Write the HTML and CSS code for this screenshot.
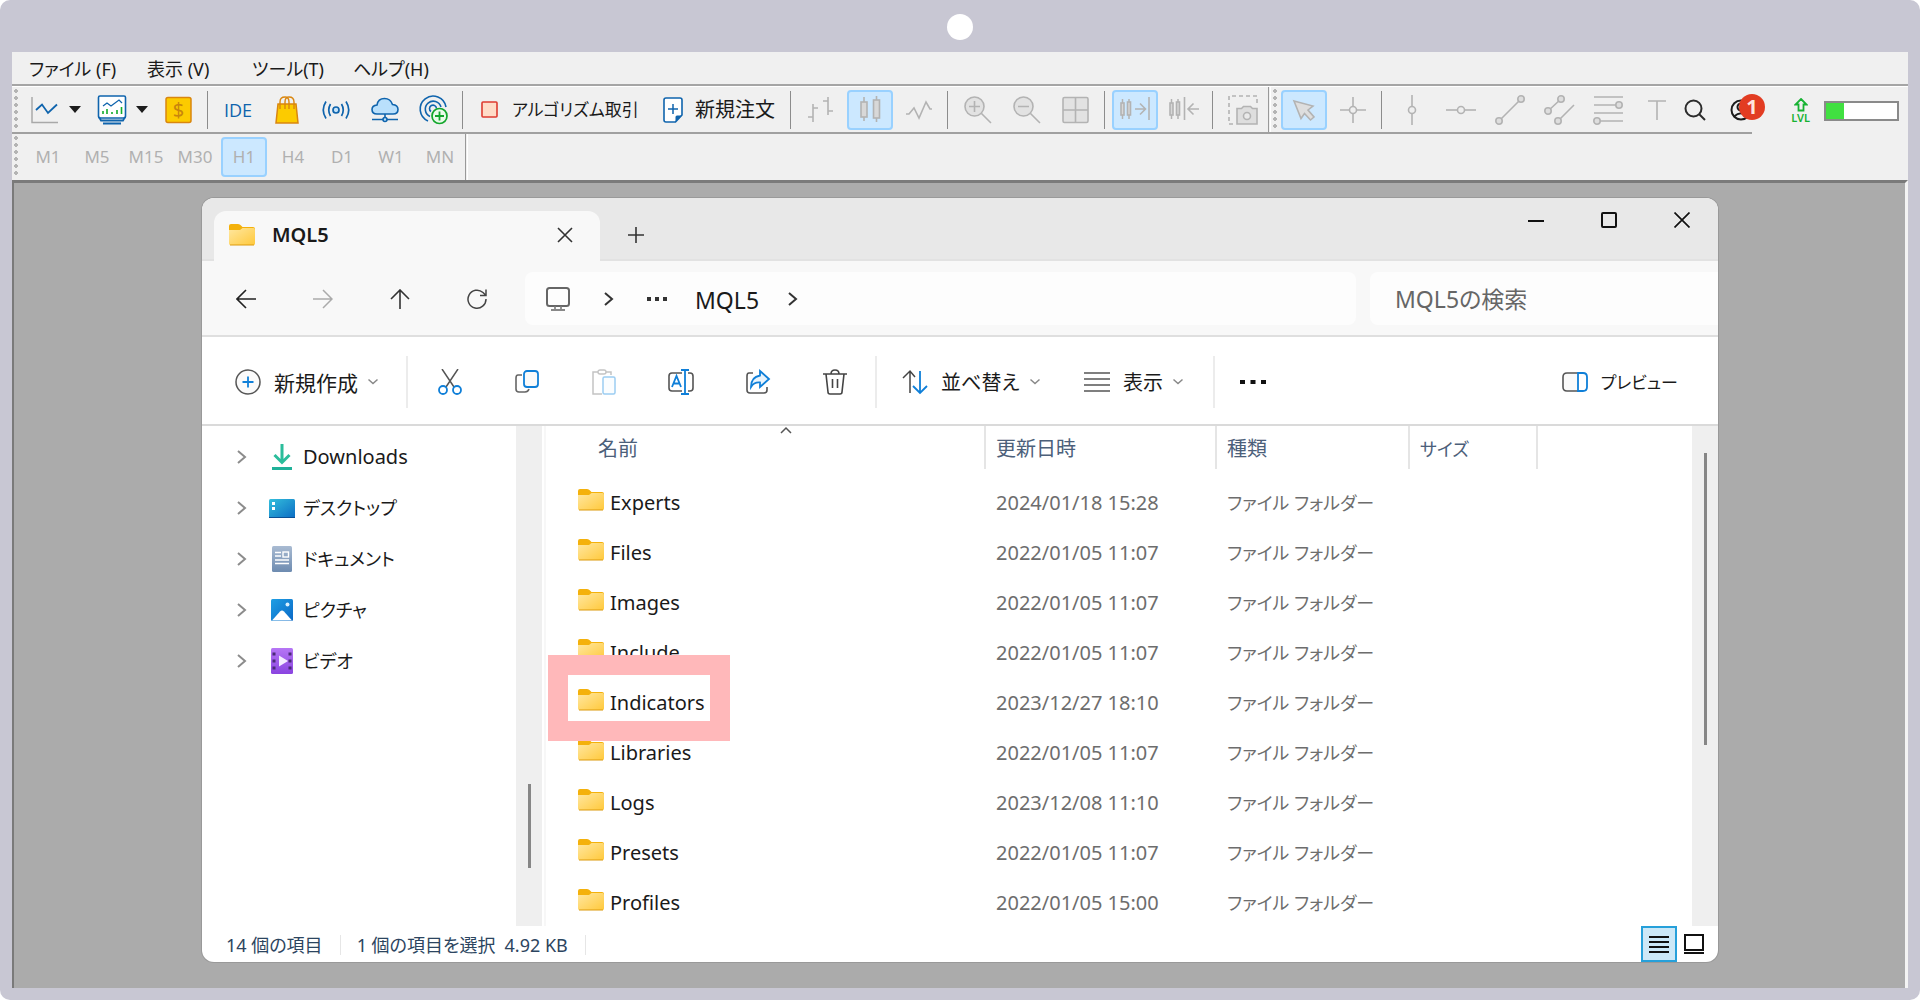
FILE: index.html
```html
<!DOCTYPE html>
<html lang="ja">
<head>
<meta charset="utf-8">
<title>MQL5</title>
<link rel="stylesheet" href="styles.css">
</head>
<body>
<svg class="defs" aria-hidden="true">
  <defs>
    <linearGradient id="gFolder" x1="0" y1="0" x2="1" y2="1"><stop offset="0" stop-color="#ffe7a0"/><stop offset="1" stop-color="#ffc93c"/></linearGradient>
    <linearGradient id="gDesk" x1="0" y1="0" x2="1" y2="1"><stop offset="0" stop-color="#34bfdc"/><stop offset="1" stop-color="#0b6cc4"/></linearGradient>
    <linearGradient id="gDoc" x1="0" y1="0" x2="0" y2="1"><stop offset="0" stop-color="#a9bbd2"/><stop offset="1" stop-color="#6d8bb0"/></linearGradient>
    <linearGradient id="gPic" x1="0" y1="0" x2="1" y2="1"><stop offset="0" stop-color="#1f9fe4"/><stop offset="1" stop-color="#0a68c6"/></linearGradient>
    <linearGradient id="gVid" x1="0" y1="0" x2="0" y2="1"><stop offset="0" stop-color="#b676f5"/><stop offset="1" stop-color="#8a44e0"/></linearGradient>
    <symbol id="folder" viewBox="0 0 26 22"><path d="M0 8V2Q0 0 2 0H9Q11 0 12 1.5L13.5 3H24Q26 3 26 5V8Z" fill="#f4b10b"/><path d="M0 6H11L13.5 4H24.500Q26 4 26 6V19.500Q26 21 24.500 21H1.500Q0 21 0 19.500Z" fill="url(#gFolder)"/><path d="M1 21H25" stroke="#dc9a0c" stroke-width="1"/></symbol>
    <symbol id="right" viewBox="0 0 12 16"><path d="M2 2L9 8L2 14" fill="none" stroke="currentColor" stroke-width="2"/></symbol>
    <symbol id="down" viewBox="0 0 12 8"><path d="M1.500 1.500L6 5.500L10.500 1.500" fill="none" stroke="currentColor" stroke-width="1.500"/></symbol>
    <symbol id="tri" viewBox="0 0 12 7"><path d="M0 0H12L6 7Z" fill="#1c1c1c"/></symbol>
    <symbol id="candles" viewBox="0 0 12 20"><path d="M2.500 0V20M9 0V20" stroke="#b3b3b3" stroke-width="1.500"/><rect x="1" y="4" width="3" height="12" fill="#d8d8d8" stroke="#b3b3b3"/><rect x="7.500" y="3" width="3" height="13" fill="#d8d8d8" stroke="#b3b3b3"/></symbol>
  </defs>
</svg>

<div class="device">
  <div class="bezel"><span class="camera"></span></div>
  <main class="app">
    <nav class="menubar" aria-label="メニュー">
      <button>ファイル (F)</button><button>表示 (V)</button><button>ツール(T)</button><button>ヘルプ(H)</button>
    </nav>

    <div class="bar-row">
      <div class="toolbar main-bar">
        <span class="grip"></span>
        <button class="tool split" aria-label="チャート"><svg class="i30" viewBox="0 0 30 30"><path d="M2 2V27.500H28" stroke="#a9a9a9" stroke-width="1.500"/><path d="M6 15L12 9.500L18 18L27 9.500" stroke="#0f64ad" stroke-width="1.800"/></svg><svg class="tri"><use href="#tri"/></svg></button>
        <button class="tool split" aria-label="表示"><svg class="i30" viewBox="0 0 30 30"><rect x="1.500" y="1" width="27" height="22" rx="1.500" fill="#fff" stroke="#0f64ad" stroke-width="1.600"/><path d="M6 11L10 8L14 11L22 5L25 8" stroke="#0f64ad" stroke-width="1.300"/><path d="M6 16V19M10 14V19M15 17V19M20 15V19M24.500 12V19" stroke="#12ad2b" stroke-width="1.600"/><path d="M2 22L4 25.500H26L28 22M6 28.500H24" stroke="#0f64ad" stroke-width="1.800"/></svg><svg class="tri"><use href="#tri"/></svg></button>
        <button class="tool" aria-label="口座"><svg class="i30" viewBox="0 0 30 30"><rect x="2" y="2.500" width="25" height="25" rx="2" fill="#fccb00" stroke="#d9860f" stroke-width="1.500"/><text class="dollar" x="14.500" y="22" text-anchor="middle">$</text></svg></button>
        <span class="sep"></span>
        <button class="tool ide">IDE</button>
        <button class="tool" aria-label="マーケット"><svg class="i30" viewBox="0 0 30 30"><path d="M6 9H24L26 28H4Z" fill="#fccb00" stroke="#d9860f" stroke-width="1.500"/><path d="M8 14V7Q8 2 13 2Q17 2 17 7V14M13 14V7Q13 2 17 2Q22 2 22 7V14" stroke="#d9860f" stroke-width="1.400"/></svg></button>
        <button class="tool" aria-label="シグナル"><svg class="i30" viewBox="0 0 30 30"><g stroke="#0f64ad" stroke-width="1.700"><circle cx="15" cy="15" r="3" fill="#c5e4fb"/><path d="M9.500 9Q6 15 9.500 21M20.500 9Q24 15 20.500 21M5 6.500Q-.5 15 5 23.500M25 6.500Q30.500 15 25 23.500"/></g></svg></button>
        <button class="tool" aria-label="VPS"><svg class="i30" viewBox="0 0 30 30"><g stroke="#0f64ad" stroke-width="1.600"><path d="M7 19Q2 19 2 14.500Q2 10.500 7 10Q8 3.500 14.500 3.500Q20.500 3.500 22.500 9.500Q28 10 28 14.500Q28 19 23 19Z" fill="#b9e0fc"/><path d="M15 19V23M2 24.500H28"/><circle cx="15" cy="24.500" r="2" fill="#b9e0fc"/></g></svg></button>
        <button class="tool" aria-label="追加"><svg class="i30" viewBox="0 0 30 30"><g stroke="#0f64ad" stroke-width="1.600"><path d="M9 26A13 13 0 1 1 27 12M11 21.500A8 8 0 1 1 22 12M12 16.500A3.500 3.500 0 1 1 17.500 13.500"/></g><circle cx="20.500" cy="21" r="7.500" fill="#e9fbe9" stroke="#12a62b" stroke-width="1.700"/><path d="M20.500 16.500V25.500M16 21H25" stroke="#12a62b" stroke-width="1.800"/></svg></button>
        <span class="sep"></span>
        <button class="tool labelled algo"><svg class="i20" viewBox="0 0 20 20"><rect x="2" y="2" width="15" height="15" rx="1" fill="#ffdcc8" stroke="#de3b30" stroke-width="1.600"/></svg>アルゴリズム取引</button>
        <button class="tool labelled order"><svg class="i2026" viewBox="0 0 20 26"><path d="M3 1H17Q19 1 19 3V18L12.500 25H3Q1 25 1 23V3Q1 1 3 1Z" fill="#fff" stroke="#0f64ad" stroke-width="1.600"/><path d="M12.500 25V20Q12.500 18.500 14 18.500H19Z" fill="#0f64ad"/><path d="M10 7V17M5 12H15" stroke="#0f64ad" stroke-width="1.500"/></svg>新規注文</button>
        <span class="sep"></span>
        <button class="tool gray" aria-label="バー"><svg class="i30" viewBox="0 0 30 30"><path d="M7 9V27M2 22H7M7 13H12M22 2V20M17 6H22M22 16H27"/></svg></button>
        <button class="tool gray on" aria-label="ローソク足"><svg class="i30" viewBox="0 0 30 30"><path d="M9 2V26M21.500 1V27"/><rect x="6" y="7" width="6" height="15" fill="#d8d8d8"/><rect x="18.500" y="5" width="6" height="18" fill="#d8d8d8"/></svg></button>
        <button class="tool gray" aria-label="ライン"><svg class="i30" viewBox="0 0 30 30"><path d="M2 19H5L10 13L15 23L22 7L26 14H28"/></svg></button>
        <span class="sep"></span>
        <button class="tool gray" aria-label="拡大"><svg class="i30" viewBox="0 0 30 30"><circle cx="11.500" cy="11.500" r="9.500" fill="#e2e2e2"/><path d="M18.500 18.500L28 28M6 11.500H17M11.500 6V17"/></svg></button>
        <button class="tool gray" aria-label="縮小"><svg class="i30" viewBox="0 0 30 30"><circle cx="11.500" cy="11.500" r="9.500" fill="#e2e2e2"/><path d="M18.500 18.500L28 28M6 11.500H17"/></svg></button>
        <button class="tool gray" aria-label="整列"><svg class="i30" viewBox="0 0 30 30"><rect x="2" y="2.500" width="25" height="25" rx="1.500" fill="#e2e2e2"/><path d="M14.500 2.500V27.500M2 15H27"/></svg></button>
        <span class="sep"></span>
        <button class="tool gray on" aria-label="自動スクロール"><svg class="i30" viewBox="0 0 30 30"><use href="#candles" x="0" y="4" width="12" height="20"/><path d="M15 14H25M20 8.500L25.500 14L20 19.500M29 2V25"/></svg></button>
        <button class="tool gray" aria-label="チャートシフト"><svg class="i30" viewBox="0 0 30 30"><use href="#candles" x="0" y="4" width="12" height="20"/><path d="M15.500 2V25M19.500 14H30M24.500 8.500L19 14L24.500 19.500"/></svg></button>
        <span class="sep"></span>
        <button class="tool gray" aria-label="スクリーンショット"><svg class="i30" viewBox="0 0 30 30"><path d="M5 29H1V1H29V11" stroke-dasharray="4 3"/><path d="M9 13.500H13.500L15.500 11.500H22.500L24.500 13.500H29V29H9Z" fill="#dedede"/><circle cx="19" cy="21" r="3.500" fill="#e9e9e9"/></svg></button>
        <span class="endline"></span>
        <span class="grip"></span>
        <button class="tool gray on" aria-label="カーソル"><svg class="i30" viewBox="0 0 30 30"><path d="M5 6L24 11L19 15L25 22L21.500 25L15.500 18.500L12 23.500Z" fill="#dedede"/></svg></button>
        <button class="tool gray" aria-label="十字"><svg class="i30" viewBox="0 0 30 30"><path d="M15 2V28M2 15H28"/><circle cx="15" cy="15" r="3.500" fill="#efefef"/></svg></button>
        <span class="sep"></span>
        <button class="tool gray" aria-label="垂直線"><svg class="i30" viewBox="0 0 30 30"><path d="M15 0V30"/><circle cx="15" cy="15" r="3.500" fill="#efefef"/></svg></button>
        <button class="tool gray" aria-label="水平線"><svg class="i30" viewBox="0 0 30 30"><path d="M0 15H30"/><circle cx="15" cy="15" r="3.500" fill="#efefef"/></svg></button>
        <button class="tool gray" aria-label="トレンドライン"><svg class="i30" viewBox="0 0 30 30"><path d="M4 26L26 4"/><circle cx="4" cy="26" r="3.200" fill="#dedede"/><circle cx="26" cy="4" r="3.200" fill="#dedede"/></svg></button>
        <button class="tool gray" aria-label="チャンネル"><svg class="i30" viewBox="0 0 30 30"><path d="M4 16L17 4M14 26L30 10"/><circle cx="4" cy="16" r="3.200" fill="#dedede"/><circle cx="17" cy="4" r="3.200" fill="#dedede"/><circle cx="14" cy="26" r="3.200" fill="#dedede"/></svg></button>
        <button class="tool gray" aria-label="フィボナッチ"><svg class="i30" viewBox="0 0 30 30"><path d="M1 2H30M1 10H26M1 18H30M4 26H30"/><circle cx="26" cy="10" r="3.200" fill="#dedede"/><circle cx="4" cy="26" r="3.200" fill="#dedede"/></svg></button>
        <button class="tool gray" aria-label="テキスト"><svg class="i30" viewBox="0 0 30 30"><path d="M6 6H24M15 6V25"/></svg></button>
        <span class="account">
          <button class="plain" aria-label="検索"><svg class="i22" viewBox="0 0 22 22"><circle cx="9.500" cy="9.500" r="8" stroke="#2b2b2b" stroke-width="2"/><path d="M15 15L21 21" stroke="#2b2b2b" stroke-width="2"/></svg></button>
          <button class="plain user" aria-label="通知"><svg class="i22" viewBox="0 0 22 22"><circle cx="11" cy="11" r="9.500" stroke="#1c1c1c" stroke-width="2"/><circle cx="11" cy="8" r="3.500" stroke="#1c1c1c" stroke-width="2"/><path d="M4 17.500Q11 11 18 17.500" stroke="#1c1c1c" stroke-width="2"/></svg><span class="badge">1</span></button>
        </span>
      </div>
      <div class="status-tools">
        <span class="lvl"><svg class="lvl-arrow" viewBox="0 0 14 14"><path d="M7 1L12.500 6.500H9.500V12.500H4.500V6.500H1.500Z" stroke="#17b233" stroke-width="1.800"/></svg>LVL</span>
        <span class="meter"><span class="meter-fill"></span></span>
      </div>
    </div>

    <div class="toolbar frames">
      <span class="grip"></span>
      <button class="tool">M1</button><button class="tool">M5</button><button class="tool">M15</button><button class="tool">M30</button><button class="tool on">H1</button><button class="tool">H4</button><button class="tool">D1</button><button class="tool">W1</button><button class="tool">MN</button>
      <span class="endline"></span>
    </div>

    <div class="workspace">
      <section class="explorer">
        <header class="titlebar">
          <div class="tab"><svg class="folder"><use href="#folder"/></svg><strong>MQL5</strong><button class="plain" aria-label="タブを閉じる"><svg class="i16" viewBox="0 0 16 16"><path d="M1 1L15 15M15 1L1 15" stroke="#333" stroke-width="1.600"/></svg></button></div>
          <button class="plain newtab" aria-label="新しいタブ"><svg class="i16" viewBox="0 0 16 16"><path d="M8 0V16M0 8H16" stroke="#333" stroke-width="1.600"/></svg></button>
          <div class="controls">
            <button class="plain" aria-label="最小化"><svg class="i16" viewBox="0 0 16 16"><path d="M0 9H16" stroke="#111" stroke-width="2"/></svg></button>
            <button class="plain" aria-label="最大化"><svg class="i16" viewBox="0 0 16 16"><rect x="1" y="1" width="14" height="14" rx="1" stroke="#111" stroke-width="2"/></svg></button>
            <button class="plain" aria-label="閉じる"><svg class="i16" viewBox="0 0 16 16"><path d="M.5 .5L15.500 15.500M15.500 .5L.5 15.500" stroke="#111" stroke-width="1.700"/></svg></button>
          </div>
        </header>

        <div class="navbar">
          <button class="plain nav" aria-label="戻る"><svg class="i20" viewBox="0 0 20 20"><path d="M20 10H1M10 1L1 10L10 19" stroke="#222" stroke-width="1.600"/></svg></button>
          <button class="plain nav" aria-label="進む"><svg class="i20" viewBox="0 0 20 20"><path d="M0 10H19M10 1L19 10L10 19" stroke="#aaa" stroke-width="1.500"/></svg></button>
          <button class="plain nav" aria-label="上へ"><svg class="i20" viewBox="0 0 20 20"><path d="M10 20V1M1 10L10 1L19 10" stroke="#333" stroke-width="1.600"/></svg></button>
          <button class="plain nav" aria-label="更新"><svg class="i20" viewBox="0 0 20 20"><path d="M19 10A9 9 0 1 1 16 3.500L18.500 6M19 .5V6.500H13" stroke="#444" stroke-width="1.500"/></svg></button>
          <div class="address">
            <svg class="pc" viewBox="0 0 24 24"><rect x="1" y="1" width="22" height="18" rx="2.500" stroke="#666" stroke-width="2"/><path d="M9 19.500V22M15 19.500V22M5 23H19" stroke="#888" stroke-width="1.800"/></svg>
            <svg class="crumb"><use href="#right"/></svg>
            <svg class="dots3" viewBox="0 0 20 4"><path d="M0 0H4V4H0ZM8 0H12V4H8ZM16 0H20V4H16Z" fill="#333"/></svg>
            <a href="#" class="path">MQL5</a>
            <svg class="crumb"><use href="#right"/></svg>
          </div>
          <input class="search" type="search" placeholder="MQL5の検索" aria-label="MQL5の検索">
        </div>

        <div class="commands">
          <button class="plain cmd create"><svg class="i26" viewBox="0 0 26 26"><circle cx="13" cy="13" r="12" fill="#fafafa" stroke="#555" stroke-width="1.500"/><path d="M13 7.500V18.500M7.500 13H18.500" stroke="#0f7fd8" stroke-width="1.800"/></svg><span>新規作成</span><svg class="down"><use href="#down"/></svg></button>
          <span class="csep"></span>
          <button class="plain nav" aria-label="切り取り"><svg class="i26" viewBox="0 0 26 26"><path d="M5 0L17 18M21 0L9 18" stroke="#555" stroke-width="1.500"/><circle cx="6" cy="21" r="4" fill="#fff" stroke="#0f7fd8" stroke-width="1.800"/><circle cx="20" cy="21" r="4" fill="#fff" stroke="#0f7fd8" stroke-width="1.800"/></svg></button>
          <button class="plain nav" aria-label="コピー"><svg class="i26" viewBox="0 0 26 26"><path d="M8 6H4Q2 6 2 9V20Q2 23 5 23H11Q14 23 15 20" stroke="#666" stroke-width="1.600"/><rect x="10" y="2" width="14" height="16" rx="3" fill="#fafafa" stroke="#0f7fd8" stroke-width="1.800"/></svg></button>
          <button class="plain nav" aria-label="貼り付け"><svg class="i26" viewBox="0 0 26 26"><path d="M11 25H2V3H7M15 3H20V6" stroke="#c4c4c4" stroke-width="1.500"/><rect x="7" y="1" width="8" height="4" rx="2" stroke="#c4c4c4" stroke-width="1.400"/><rect x="12" y="8" width="12" height="17" rx="1.500" fill="#fafdff" stroke="#9ccdf2" stroke-width="1.500"/></svg></button>
          <button class="plain nav" aria-label="名前の変更"><svg class="i28" viewBox="0 0 28 26"><path d="M15 4H5Q2 4 2 7V19Q2 22 5 22H15M21 4H23Q26 4 26 7V19Q26 22 23 22H21" stroke="#555" stroke-width="1.600"/><path d="M5 18L9.500 7L14 18M6.500 14.500H12.500M14 1H22M18 1V25M14 25H22" stroke="#0f7fd8" stroke-width="1.800"/></svg></button>
          <button class="plain nav" aria-label="共有"><svg class="i26" viewBox="0 0 26 26"><path d="M8 4H4Q2 4 2 7V21Q2 24 5 24H19Q22 24 22 21V18" stroke="#555" stroke-width="1.600"/><path d="M15 2L24 10L15 18V13.500Q9 13 6 18Q6 8 15 6.500Z" fill="#e8f4fd" stroke="#0f7fd8" stroke-width="1.800"/></svg></button>
          <button class="plain nav" aria-label="削除"><svg class="i26" viewBox="0 0 26 26"><path d="M1 5H25M9 5Q9 1 13 1Q17 1 17 5M4 5L6 23Q6 25 8 25H18Q20 25 20 23L22 5M10.500 10V19M15.500 10V19" stroke="#444" stroke-width="1.600"/></svg></button>
          <span class="csep"></span>
          <button class="plain cmd sort"><svg class="i26" viewBox="0 0 26 26"><path d="M8 24V2M1 9L8 2L13 8" stroke="#444" stroke-width="1.500"/><path d="M18 2V24M11 17L18 24L25 17" stroke="#0f7fd8" stroke-width="1.800"/></svg><span>並べ替え</span><svg class="down"><use href="#down"/></svg></button>
          <button class="plain cmd view"><svg class="i26" viewBox="0 0 26 26"><path d="M0 4H26M0 10H26M0 16H26M0 22H26" stroke="#555" stroke-width="1.600"/></svg><span>表示</span><svg class="down"><use href="#down"/></svg></button>
          <span class="csep"></span>
          <button class="plain cmd more" aria-label="その他"><svg class="i26" viewBox="0 0 26 26"><path d="M0 11H5V15H0ZM10.500 11H15.500V15H10.500ZM21 11H26V15H21Z" fill="#111"/></svg></button>
          <button class="plain cmd preview"><svg class="i26" viewBox="0 0 26 26"><path d="M16 4H5Q1 4 1 8V18Q1 22 5 22H16" fill="#fafafa" stroke="#555" stroke-width="1.600"/><path d="M16 4H21Q25 4 25 8V18Q25 22 21 22H16Z" stroke="#0f7fd8" stroke-width="1.800"/></svg><span>プレビュー</span></button>
        </div>

        <div class="content">
          <nav class="tree" aria-label="フォルダー">
            <a href="#"><svg class="exp"><use href="#right"/></svg><svg class="i26" viewBox="0 0 26 26"><path d="M13 0V18M5.500 11L13 18.500L20.500 11" stroke="#2bbd9b" stroke-width="3"/><rect x="3" y="23" width="20" height="3" fill="#1fb199"/></svg>Downloads</a>
            <a href="#" class="kana"><svg class="exp"><use href="#right"/></svg><svg class="i26" viewBox="0 0 26 26"><rect y="4" width="26" height="19" rx="1.500" fill="url(#gDesk)"/><path d="M3 7H6V10H3ZM3 12H6V15H3Z" fill="#fff"/><path d="M0 22.500H26" stroke="#0a4f94"/></svg>デスクトップ</a>
            <a href="#" class="kana"><svg class="exp"><use href="#right"/></svg><svg class="i26" viewBox="0 0 26 26"><rect x="3" width="20" height="26" rx="1.500" fill="url(#gDoc)"/><path d="M6 6.500H12M6 10H12M6 14H20M6 17.500H20" stroke="#fff" stroke-width="1.500"/><rect x="14" y="6" width="5.500" height="5" stroke="#fff" stroke-width="1.400"/></svg>ドキュメント</a>
            <a href="#" class="kana"><svg class="exp"><use href="#right"/></svg><svg class="i26" viewBox="0 0 26 26"><rect x="2" y="2" width="22" height="22" rx="1.500" fill="url(#gPic)"/><path d="M3 23.500L11 14.500Q13 12.500 15 14.500L23 23.500Z" fill="#fff"/><circle cx="18.500" cy="7.500" r="2" fill="#d9f0ff"/></svg>ピクチャ</a>
            <a href="#" class="kana"><svg class="exp"><use href="#right"/></svg><svg class="i26" viewBox="0 0 26 26"><rect x="2" width="22" height="26" rx="1.500" fill="url(#gVid)"/><path d="M3.500 4.500H6.500V7.500H3.500ZM3.500 11.500H6.500V14.500H3.500ZM3.500 18.500H6.500V21.500H3.500ZM19.500 4.500H22.500V7.500H19.500ZM19.500 11.500H22.500V14.500H19.500ZM19.500 18.500H22.500V21.500H19.500Z" fill="#4b2a78"/><path d="M10 7.500L19 13L10 18.500Z" fill="#f4ecff"/></svg>ビデオ</a>
          </nav>
          <div class="scroll left"><span class="thumb"></span></div>
          <div class="listing">
            <svg class="sorted" viewBox="0 0 12 8"><path d="M1 7L6 2L11 7" fill="none" stroke="#555" stroke-width="1.500"/></svg>
            <table>
              <colgroup><col class="c-name"><col class="c-date"><col class="c-type"><col class="c-size"><col></colgroup>
              <thead><tr><th><span>名前</span></th><th><span>更新日時</span></th><th><span>種類</span></th><th><span class="kana">サイズ</span></th><th></th></tr></thead>
              <tbody>
                <tr><td><svg class="folder"><use href="#folder"/></svg>Experts</td><td>2024/01/18 15:28</td><td>ファイル フォルダー</td><td></td><td></td></tr>
                <tr><td><svg class="folder"><use href="#folder"/></svg>Files</td><td>2022/01/05 11:07</td><td>ファイル フォルダー</td><td></td><td></td></tr>
                <tr><td><svg class="folder"><use href="#folder"/></svg>Images</td><td>2022/01/05 11:07</td><td>ファイル フォルダー</td><td></td><td></td></tr>
                <tr><td><svg class="folder"><use href="#folder"/></svg>Include</td><td>2022/01/05 11:07</td><td>ファイル フォルダー</td><td></td><td></td></tr>
                <tr class="marked"><td><span class="marker"></span><svg class="folder"><use href="#folder"/></svg>Indicators</td><td>2023/12/27 18:10</td><td>ファイル フォルダー</td><td></td><td></td></tr>
                <tr><td><svg class="folder"><use href="#folder"/></svg>Libraries</td><td>2022/01/05 11:07</td><td>ファイル フォルダー</td><td></td><td></td></tr>
                <tr><td><svg class="folder"><use href="#folder"/></svg>Logs</td><td>2023/12/08 11:10</td><td>ファイル フォルダー</td><td></td><td></td></tr>
                <tr><td><svg class="folder"><use href="#folder"/></svg>Presets</td><td>2022/01/05 11:07</td><td>ファイル フォルダー</td><td></td><td></td></tr>
                <tr><td><svg class="folder"><use href="#folder"/></svg>Profiles</td><td>2022/01/05 15:00</td><td>ファイル フォルダー</td><td></td><td></td></tr>
              </tbody>
            </table>
          </div>
          <div class="scroll right"><span class="thumb"></span></div>
        </div>

        <footer class="statusbar">
          <span class="cell">14 個の項目</span>
          <span class="cell"><span>1 個の項目を選択</span><span>4.92 KB</span></span>
          <div class="views">
            <button class="plain active" aria-label="詳細"><svg class="i20" viewBox="0 0 20 20"><path d="M0 3H20M0 8H20M0 13H20M0 18H20" stroke="#111" stroke-width="2"/></svg></button>
            <button class="plain" aria-label="大アイコン"><svg class="i20" viewBox="0 0 20 20"><rect x="1" y="1" width="18" height="15" stroke="#111" stroke-width="2"/><path d="M0 19H20" stroke="#111" stroke-width="2"/></svg></button>
          </div>
        </footer>
      </section>
    </div>
  </main>
</div>
</body>
</html>
```
FILE: styles.css
```css
* { box-sizing: border-box; }

body {
  margin: 0;
  background: #fff;
  color: #1a1a1a;
  font-family: "Noto Sans", "Noto Sans CJK JP", sans-serif;
  font-size: 20px;
  line-height: 28px;
  font-feature-settings: "palt";
}

.defs { position: absolute; width: 0; height: 0; }
svg { display: block; flex: none; fill: none; }
button { font: inherit; font-feature-settings: inherit; color: inherit; background: none; border: 0; padding: 0; }
a { color: inherit; text-decoration: none; }

.i16 { width: 16px; height: 16px; }
.i20 { width: 20px; height: 20px; }
.i22 { width: 22px; height: 22px; }
.i26 { width: 26px; height: 26px; }
.i28 { width: 28px; height: 26px; }
.i30 { width: 30px; height: 30px; overflow: visible; }
.i2026 { width: 20px; height: 26px; }
.folder { width: 26px; height: 22px; }
.tri { width: 12px; height: 7px; }
.down { width: 12px; height: 8px; color: #888; }
.kana { font-size: 18px; }

.device {
  display: flex;
  flex-direction: column;
  min-height: 100vh;
  padding: 0 12px 12px;
  border-radius: 10px;
  background: #c8c7d3;
}
.bezel { display: flex; justify-content: center; align-items: center; height: 52px; padding-top: 2px; }
.camera { width: 26px; height: 26px; border-radius: 50%; background: #fff; }
.app { display: flex; flex-direction: column; flex: 1; background: #f0f0f0; }

.menubar {
  display: grid;
  grid-template-columns: 118px 105px 101px auto;
  height: 34px;
  padding: 2px 17px 0;
  border-bottom: 2px solid #a5a5a5;
  font-size: 18px;
  white-space: nowrap;
}
.menubar button { text-align: left; }

.bar-row { display: flex; height: 48px; border-top: 1px solid #fff; }
.toolbar { display: flex; align-items: center; gap: 3px; padding-left: 2px; white-space: nowrap; }
.main-bar { flex: 1; min-width: 0; border-bottom: 2px solid #a0a0a0; }
.status-tools { display: flex; align-items: center; justify-content: flex-end; gap: 14px; width: 156px; padding-right: 9px; }

.grip {
  flex: none;
  width: 4px;
  height: 42px;
  margin-right: 1px;
  background: radial-gradient(circle at 2px 2px, #b4b4b4 2px, transparent 2px) 0 0 / 4px 7px;
}
.tool {
  display: flex;
  flex: none;
  align-items: center;
  justify-content: center;
  width: 46px;
  height: 40px;
  border: 2px solid transparent;
  border-radius: 4px;
}
.tool.on { background: #cce8ff; border-color: #99d1ff; }
.tool.split { width: 64px; justify-content: flex-start; gap: 9px; padding-left: 6px; }
.tool.labelled { justify-content: flex-start; gap: 12px; padding-left: 8px; }
.tool.algo { width: 180px; font-size: 17px; }
.tool.order { width: 132px; }
.tool.gray svg { stroke: #b3b3b3; stroke-width: 1.600px; }
.tool.ide { font-size: 18px; font-family: "Open Sans", sans-serif; color: #0f64ad; }
.dollar { font: 20px "Noto Sans", sans-serif; fill: #c8850c; }
.sep { flex: none; width: 7px; height: 38px; background: linear-gradient(#8c8c8c, #8c8c8c) 2px 0 / 1px 100% no-repeat; }
.endline { flex: none; align-self: stretch; width: 3px; border-left: 1px solid #999; border-right: 1px solid #fff; }
.main-bar .endline { margin: 0 -1px; }

.plain { display: flex; align-items: center; justify-content: center; flex: none; }
.account { display: flex; align-items: center; gap: 24px; margin-left: auto; }
.user { position: relative; }
.badge {
  position: absolute;
  left: 9px;
  top: -5px;
  width: 26px;
  height: 26px;
  border-radius: 50%;
  background: #e23c22;
  color: #ffe4de;
  font-size: 20px;
  font-weight: 700;
  line-height: 26px;
}
.lvl { display: flex; flex-direction: column; align-items: center; color: #17b233; font-size: 11px; font-weight: 600; line-height: 12px; }
.lvl-arrow { width: 14px; height: 14px; }
.meter { width: 75px; height: 20px; border: 2px solid #8a8a8a; background: #fff; }
.meter-fill { display: block; width: 26%; height: 100%; background: #41e041; }

.frames { height: 46px; font-size: 17px; color: #b0b0b0; }
.frames .grip { margin-right: 4px; }
.frames .endline { margin-left: -1px; }

.workspace {
  flex: 1;
  padding: 15px 187px 26px 188px;
  border: solid #7a7a7a;
  border-width: 3px 0 0 2px;
  border-right: 3px solid #f4f4f4;
  background: #ababab;
}

.explorer {
  display: flex;
  flex-direction: column;
  border-radius: 12px;
  background: #fff;
  box-shadow: 0 0 0 1px #999;
  overflow: hidden;
}

.titlebar { display: flex; height: 63px; background: #e8e8e8; border-bottom: 2px solid #e2e2e2; }
.tab {
  display: flex;
  align-items: center;
  gap: 17px;
  width: 386px;
  height: 52px;
  margin: 13px 0 0 12px;
  padding: 0 27px 4px 15px;
  border-radius: 12px 12px 0 0;
  background: #f8f8f8;
}
.tab strong { flex: 1; font-weight: 600; }
.newtab { margin: 12px 0 0 28px; }
.controls { display: flex; height: 44px; margin-left: auto; }
.controls .plain { width: 73px; }

.navbar { display: flex; height: 76px; padding: 11px 0 10px 5px; background: #f8f8f8; border-bottom: 2px solid #dfdfdf; }
.nav { width: 77px; }
.address {
  display: flex;
  align-items: center;
  flex: 1;
  margin: 0 14px 0 10px;
  padding-left: 21px;
  border-radius: 8px;
  background: #fdfdfd;
}
.pc { width: 24px; height: 24px; margin-right: 33px; }
.crumb { width: 12px; height: 16px; color: #333; }
.dots3 { width: 20px; height: 4px; margin: 0 28px 0 32px; }
.path { margin-right: 28px; padding-top: 3px; font-size: 23px; }
.search {
  width: 348px;
  padding: 0 0 0 25px;
  border: 0;
  border-radius: 8px 0 0 8px;
  background: #fdfdfd;
  font: inherit;
  font-size: 23px;
  font-feature-settings: inherit;
}
.search::placeholder { color: #666; opacity: 1; }

.commands { display: flex; align-items: center; height: 89px; padding-top: 2px; border-bottom: 2px solid #dadada; white-space: nowrap; }
.cmd { justify-content: flex-start; gap: 13px; }
.cmd span { padding-top: 3px; }
.cmd .down { margin-left: -4px; }
.create { width: 202px; padding-left: 33px; font-size: 21px; }
.csep { flex: none; width: 2px; height: 52px; margin: 0 3px 0 2px; background: #ececec; }
.sort { width: 180px; padding-left: 22px; }
.view { width: 151px; padding-left: 24px; }
.more { padding-left: 22px; }
.preview { margin-left: auto; padding-right: 40px; font-size: 17px; }

.content { display: flex; flex: 1; }
.tree { display: flex; flex-direction: column; flex: none; width: 314px; padding: 5px 0; }
.tree a { display: flex; align-items: center; height: 51px; padding-left: 34px; gap: 8px; }
.exp { width: 12px; height: 16px; margin-right: 13px; color: #8c8c8c; }
.scroll { flex: none; width: 26px; background: #efefef; }
.scroll .thumb { display: block; width: 3px; margin-left: 12px; background: #868686; }
.scroll.left .thumb { height: 84px; margin-top: 358px; }
.scroll.right .thumb { height: 292px; margin-top: 27px; }

.listing { position: relative; flex: 1; min-width: 0; margin-left: 2px; border-left: 2px solid #f7f7f7; }
.sorted { position: absolute; left: 234px; top: 0; width: 12px; height: 8px; }
table { width: 100%; border-collapse: collapse; table-layout: fixed; }
.c-name { width: 440px; }
.c-date { width: 231px; }
.c-type { width: 193px; }
.c-size { width: 128px; }
th { height: 50px; padding: 0; vertical-align: top; text-align: left; font-weight: 400; color: #4c607a; }
th span { display: block; height: 43px; padding: 9px 0 0 10px; border-right: 2px solid #e5e5e5; }
th:first-child span { padding-left: 52px; }
td { height: 50px; padding: 3px 0 0 10px; color: #6d6d6d; white-space: nowrap; }
td:first-child { padding-left: 32px; color: #1a1a1a; }
td:nth-child(3) { font-size: 18px; }
td .folder { display: inline-block; margin-right: 6px; vertical-align: -1px; }
.marked td:first-child { position: relative; }
.marker { position: absolute; left: 2px; top: -21px; width: 182px; height: 86px; border: 20px solid #ffb8ba; }

.statusbar { display: flex; height: 36px; padding-left: 24px; font-size: 18px; color: #2c4560; white-space: nowrap; }
.cell { display: flex; align-items: center; gap: 9px; height: 20px; margin: 9px 16px 0 0; padding-right: 17px; border-right: 1px solid #e6e6e6; }
.views { display: flex; gap: 7px; margin-left: auto; padding-right: 14px; }
.views .active { width: 36px; border: 2px solid #26a0da; background: #cce8f7; }
```
